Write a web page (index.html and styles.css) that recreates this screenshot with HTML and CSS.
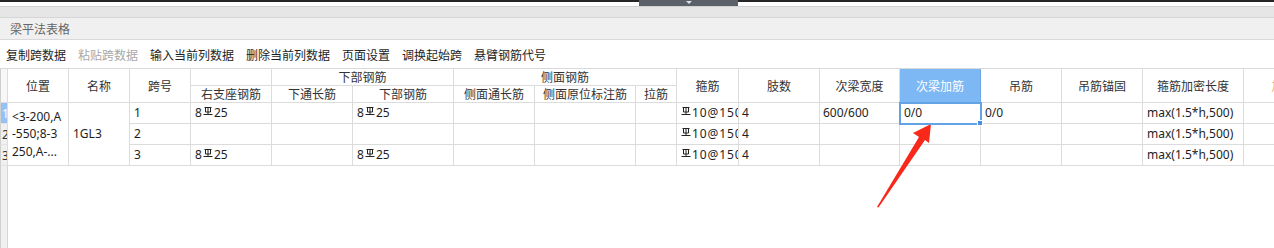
FILE: index.html
```html
<!DOCTYPE html>
<html lang="zh">
<head>
<meta charset="utf-8">
<title>梁平法表格</title>
<link rel="stylesheet" href="styles.css">
</head>
<body>
<div class="page">
  <div class="topstrip"><div class="dropbox"><span class="caret"></span></div></div>
  <div class="band"></div>
  <div class="titlebar">梁平法表格</div>
  <div class="toolbar">
    <span class="tool">复制跨数据</span>
    <span class="tool disabled">粘贴跨数据</span>
    <span class="tool">输入当前列数据</span>
    <span class="tool">删除当前列数据</span>
    <span class="tool">页面设置</span>
    <span class="tool">调换起始跨</span>
    <span class="tool">悬臂钢筋代号</span>
  </div>

  <div class="grid">
    <!-- header row 1 -->
    <div class="cell corner r2"></div>
    <div class="cell hd r2">位置</div>
    <div class="cell hd r2">名称</div>
    <div class="cell hd r2">跨号</div>
    <div class="cell hd"></div>
    <div class="cell hd c2">下部钢筋</div>
    <div class="cell hd c3">侧面钢筋</div>
    <div class="cell hd r2">箍筋</div>
    <div class="cell hd r2">肢数</div>
    <div class="cell hd r2">次梁宽度</div>
    <div class="cell hd r2 hd-sel">次梁加筋</div>
    <div class="cell hd r2">吊筋</div>
    <div class="cell hd r2">吊筋锚固</div>
    <div class="cell hd r2">箍筋加密长度</div>
    <div class="cell hd r2 hd-last">加腋钢筋</div>
    <!-- header row 2 -->
    <div class="cell hd">右支座钢筋</div>
    <div class="cell hd">下通长筋</div>
    <div class="cell hd">下部钢筋</div>
    <div class="cell hd">侧面通长筋</div>
    <div class="cell hd">侧面原位标注筋</div>
    <div class="cell hd">拉筋</div>

    <!-- data row 1 -->
    <div class="cell rn rn-sel">1</div>
    <div class="cell td r3 multi"><span>&lt;3-200,A</span><span>-550;8-3</span><span>250,A-...</span></div>
    <div class="cell td r3">1GL3</div>
    <div class="cell td">1</div>
    <div class="cell td">8<svg class="steel" viewBox="0 0 10 8"><path d="M1.5 0.5H8.5M2.5 0.5V5H7.5V0.5M5 0V7M0.5 7.5H9.5"/></svg>25</div>
    <div class="cell td"></div>
    <div class="cell td">8<svg class="steel" viewBox="0 0 10 8"><path d="M1.5 0.5H8.5M2.5 0.5V5H7.5V0.5M5 0V7M0.5 7.5H9.5"/></svg>25</div>
    <div class="cell td"></div>
    <div class="cell td"></div>
    <div class="cell td"></div>
    <div class="cell td gj"><svg class="steel" viewBox="0 0 10 8"><path d="M1.5 0.5H8.5M2.5 0.5V5H7.5V0.5M5 0V7M0.5 7.5H9.5"/></svg>10@150</div>
    <div class="cell td tight">4</div>
    <div class="cell td tight">600/600</div>
    <div class="cell td sel">0/0</div>
    <div class="cell td">0/0</div>
    <div class="cell td"></div>
    <div class="cell td">max(1.5*h,500)</div>
    <div class="cell td"></div>

    <!-- data row 2 -->
    <div class="cell rn">2</div>
    <div class="cell td">2</div>
    <div class="cell td"></div>
    <div class="cell td"></div>
    <div class="cell td"></div>
    <div class="cell td"></div>
    <div class="cell td"></div>
    <div class="cell td"></div>
    <div class="cell td gj"><svg class="steel" viewBox="0 0 10 8"><path d="M1.5 0.5H8.5M2.5 0.5V5H7.5V0.5M5 0V7M0.5 7.5H9.5"/></svg>10@150</div>
    <div class="cell td tight">4</div>
    <div class="cell td"></div>
    <div class="cell td"></div>
    <div class="cell td"></div>
    <div class="cell td"></div>
    <div class="cell td">max(1.5*h,500)</div>
    <div class="cell td"></div>

    <!-- data row 3 -->
    <div class="cell rn">3</div>
    <div class="cell td">3</div>
    <div class="cell td">8<svg class="steel" viewBox="0 0 10 8"><path d="M1.5 0.5H8.5M2.5 0.5V5H7.5V0.5M5 0V7M0.5 7.5H9.5"/></svg>25</div>
    <div class="cell td"></div>
    <div class="cell td">8<svg class="steel" viewBox="0 0 10 8"><path d="M1.5 0.5H8.5M2.5 0.5V5H7.5V0.5M5 0V7M0.5 7.5H9.5"/></svg>25</div>
    <div class="cell td"></div>
    <div class="cell td"></div>
    <div class="cell td"></div>
    <div class="cell td gj"><svg class="steel" viewBox="0 0 10 8"><path d="M1.5 0.5H8.5M2.5 0.5V5H7.5V0.5M5 0V7M0.5 7.5H9.5"/></svg>10@150</div>
    <div class="cell td tight">4</div>
    <div class="cell td"></div>
    <div class="cell td"></div>
    <div class="cell td"></div>
    <div class="cell td"></div>
    <div class="cell td">max(1.5*h,500)</div>
    <div class="cell td"></div>
  </div>

  <div class="filler"><div class="filler-strip"></div></div>
</div>

<svg class="arrow" width="1274" height="248" viewBox="0 0 1274 248">
  <polygon points="877,207 919,137 913,133 931,124 929,143 925,140 878.5,207.5"/>
</svg>
</body>
</html>
```
FILE: styles.css
```css
html, body {
  margin: 0;
  padding: 0;
  background: #ffffff;
}
body {
  position: relative;
  width: 1274px;
  height: 248px;
  overflow: hidden;
  font-family: "Noto Sans", "Noto Sans CJK SC", sans-serif;
  font-size: 12px;
  color: #222;
}
.page {
  display: flex;
  flex-direction: column;
  height: 248px;
}
.topstrip {
  height: 6px;
  border-bottom: 1px solid #d2d2d2;
  background: linear-gradient(#262626 0, #262626 2px, #ffffff 2px);
  padding-left: 639px;
  display: flex;
}
.dropbox {
  width: 99px;
  height: 6px;
  background: #5b6169;
  display: flex;
  justify-content: center;
}
.caret {
  width: 0;
  height: 0;
  margin-top: 1px;
  border-left: 3px solid transparent;
  border-right: 3px solid transparent;
  border-top: 3px solid #e0e0e0;
}
.band {
  height: 10px;
  background: #e6e6e6;
  border-bottom: 1px solid #d5d5d5;
}
.titlebar {
  height: 21px;
  line-height: 21px;
  background: #f0f0f0;
  border-bottom: 1px solid #d9d9d9;
  padding-left: 10px;
  color: #666666;
  font-family: "Noto Sans CJK SC", sans-serif;
}
.toolbar {
  height: 28px;
  display: flex;
  align-items: center;
  gap: 12px;
  padding-left: 6px;
  font-family: "Noto Sans CJK SC", sans-serif;
  color: #1e1e1e;
}
.tool.disabled {
  color: #a8a8a8;
}
.grid {
  display: grid;
  grid-template-columns: 8px 61px 61px 61px 81px 81px 101px 81px 101px 41px 62px 81px 80px 81px 81px 81px 101px 104px;
  grid-template-rows: 17px 17px 21px 21px 21px;
  border-top: 1px solid #dadada;
  width: 1348px;
}
.cell {
  box-sizing: border-box;
  border-right: 1px solid #dcdcdc;
  border-bottom: 1px solid #dcdcdc;
  white-space: nowrap;
  overflow: hidden;
  display: flex;
  align-items: center;
}
.r2 { grid-row: span 2; }
.r3 { grid-row: span 3; }
.c2 { grid-column: span 2; }
.c3 { grid-column: span 3; }
.corner {
  background: #f7f7f7;
  border-left: 1px solid #cfcfcf;
}
.hd {
  justify-content: center;
  color: #333;
  font-family: "Noto Sans CJK SC", sans-serif;
  line-height: 16px;
}
.hd-sel {
  background: #7db8f5;
  color: #ffffff;
  border-right-color: #6aa6e8;
}
.hd-last {
  color: #efb268;
}
.rn {
  background: #f0f0f0;
  border-left: 1px solid #cfcfcf;
  border-bottom-color: #e2e2e2;
  padding-left: 1px;
  color: #333;
  font-size: 12px;
}
.rn-sel {
  background: #95c2f2;
  color: #ffffff;
}
.td {
  padding-left: 4px;
  color: #1e1e1e;
  line-height: 16px;
}
.td.tight {
  padding-left: 3px;
}
.td.gj {
  letter-spacing: 0.9px;
}
.multi {
  flex-direction: column;
  align-items: flex-start;
  justify-content: center;
  line-height: 17.5px;
}
.sel {
  position: relative;
  overflow: visible;
  outline: 2px solid #64a2e6;
  outline-offset: -1px;
  z-index: 1;
}
.sel::after {
  content: "";
  position: absolute;
  right: -3px;
  bottom: -3px;
  width: 4px;
  height: 4px;
  background: #4a8fdf;
  border: 1px solid #ffffff;
}
.steel {
  width: 10px;
  height: 8px;
  margin: 0 1px 5px 1px;
  flex: none;
  fill: none;
  stroke: #222;
  stroke-width: 1;
}
.gj .steel {
  margin-left: 0;
}
.filler {
  flex: 1;
  display: flex;
}
.filler-strip {
  width: 8px;
  background: #f0f0f0;
  border-left: 1px solid #cfcfcf;
  border-right: 1px solid #d6d6d6;
  box-sizing: border-box;
}
.arrow {
  position: absolute;
  left: 0;
  top: 0;
  pointer-events: none;
}
.arrow polygon {
  fill: #f8291b;
}
```
